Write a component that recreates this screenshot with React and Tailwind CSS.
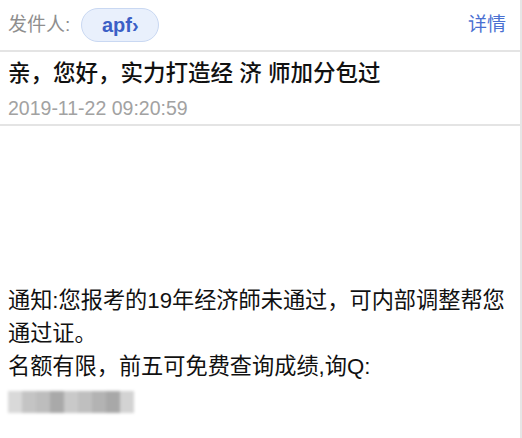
import React from 'react';

const font = { fontFamily: '"Liberation Sans", "Noto Sans CJK SC", sans-serif' };

export default function App() {
    const blur = ['#d9d9d9', '#c4c4c4', '#bdbdbd', '#a9a9a9', '#c9c9c9', '#bfbfbf', '#b3b3b3', '#a8a8a8', '#d3d3d3'];
    return (
        <div className="w-[522px] h-[438px] bg-white flex overflow-hidden" style={font}>
            <div className="flex-1 flex flex-col">
                <div className="h-[52px] flex items-center pl-[8px] pr-[14px] border-b-2 border-[#e4e4e4]">
                    <span className="text-[19px] text-[#8e8e8e]">发件人:</span>
                    <span className="ml-[11px] w-[78px] h-[34px] flex items-center justify-center rounded-full bg-[#e9f0fc] border border-[#c9d8f2] text-[20px] font-semibold text-[#3b5fc6]">
                        apf›
                    </span>
                    <span className="ml-auto text-[19px] text-[#4a70d2]">详情</span>
                </div>
                <div className="h-[74px] pl-[8px] pt-[5px] border-b-2 border-[#e4e4e4]">
                    <div className="text-[22.5px] leading-[34px] font-medium text-[#111]">亲，您好，实力打造经 济 师加分包过</div>
                    <div className="text-[19.5px] leading-[34px] text-[#a2a2a2]">2019-11-22 09:20:59</div>
                </div>
                <div className="pl-[8px] pr-[8px] pt-[158px] text-[22.2px] leading-[33px] text-[#111]">
                    <div>通知:您报考的19年经济師未通过，可内部调整帮您通过证。</div>
                    <div>名额有限，前五可免费查询成绩,询Q:</div>
                    <div className="flex mt-[8px] h-[22px] blur-[1.5px]">
                        {blur.map((c, i) => (
                            <div key={i} className="w-[14px] h-full" style={{ background: c }} />
                        ))}
                    </div>
                </div>
            </div>
            <div className="w-[2px] h-full bg-[#e6e6e6]" />
        </div>
    );
}
